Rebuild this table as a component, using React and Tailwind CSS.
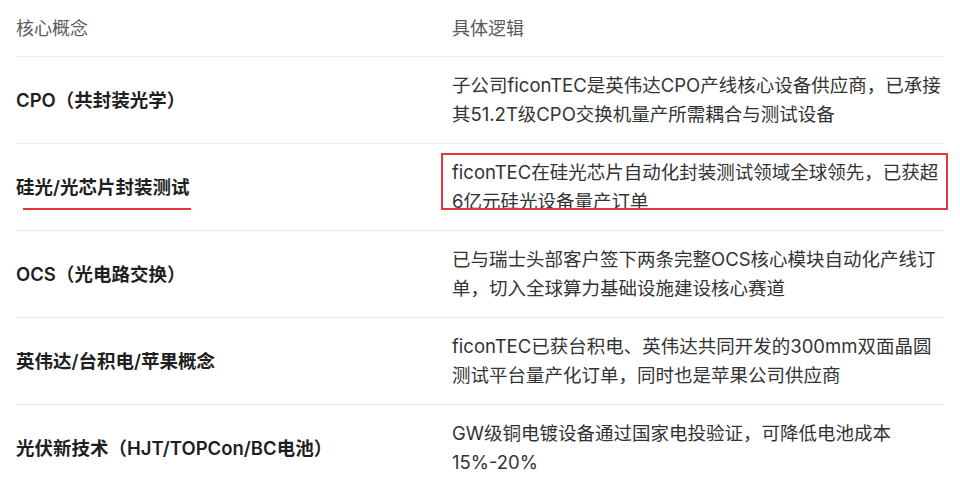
import React from "react";

const rows = [
  {
    k: "CPO（共封装光学）",
    v: ["子公司ficonTEC是英伟达CPO产线核心设备供应商，已承接", "其51.2T级CPO交换机量产所需耦合与测试设备"],
  },
  {
    k: "硅光/光芯片封装测试",
    v: ["ficonTEC在硅光芯片自动化封装测试领域全球领先，已获超", "6亿元硅光设备量产订单"],
  },
  {
    k: "OCS（光电路交换）",
    v: ["已与瑞士头部客户签下两条完整OCS核心模块自动化产线订", "单，切入全球算力基础设施建设核心赛道"],
  },
  {
    k: "英伟达/台积电/苹果概念",
    v: ["ficonTEC已获台积电、英伟达共同开发的300mm双面晶圆", "测试平台量产化订单，同时也是苹果公司供应商"],
  },
  {
    k: "光伏新技术（HJT/TOPCon/BC电池）",
    v: ["GW级铜电镀设备通过国家电投验证，可降低电池成本", "15%-20%"],
  },
];

export default function App() {
  return (
    <div
      className="relative w-[960px] h-[492px] overflow-hidden bg-white"
      style={{ fontFamily: 'Inter, "Noto Sans CJK SC", sans-serif' }}
    >
      <div className="ml-4 w-[928px]">
        <div className="grid grid-cols-[436px_1fr] border-b border-[#ebebeb] pt-[14px] pb-[13px] text-[18px] leading-[29px] text-[#5a5a5a]">
          <div>核心概念</div>
          <div>具体逻辑</div>
        </div>
        {rows.map((r, i) => (
          <div
            key={i}
            className="grid grid-cols-[436px_1fr] items-center border-b border-[#ebebeb] last:border-b-0 py-[14px] text-[18.5px] leading-[29px]"
          >
            <div className="font-semibold text-[#1f1f1f] whitespace-nowrap">{r.k}</div>
            <div className="text-[#333333] whitespace-nowrap">
              {r.v[0]}
              <br />
              {r.v[1]}
            </div>
          </div>
        ))}
      </div>
      <div className="absolute left-[23px] top-[208px] w-[168px] h-[2px] bg-[#e5383d]" />
      <div className="absolute left-[441px] top-[153px] w-[507px] h-[57px] border-2 border-solid border-[#e03a3e]" />
    </div>
  );
}
